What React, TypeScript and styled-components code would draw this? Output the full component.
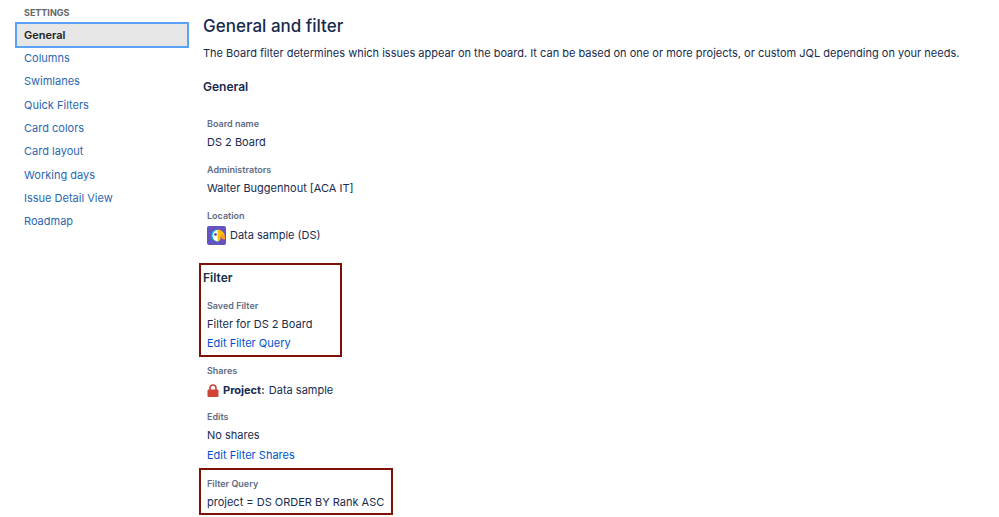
import React from "react";
import styled, { createGlobalStyle } from "styled-components";

const GlobalStyle = createGlobalStyle`
  *, *::before, *::after { box-sizing: border-box; }
  body {
    margin: 0;
    background: #fff;
    color: #172b4d;
    font-family: Inter, "Liberation Sans", sans-serif;
    font-size: 11px;
    line-height: 20px;
  }
`;

const Page = styled.div`
  display: grid;
  grid-template-columns: 174px minmax(0, 1fr);
  column-gap: 10px;
  padding: 0 15px;
`;

const Sidebar = styled.nav`
  padding-top: 5px;
`;

const SidebarTitle = styled.h2`
  margin: 0 0 2px;
  padding-left: 9px;
  color: #666;
  font-size: 9px;
  font-weight: 700;
  line-height: 16px;
`;

const NavList = styled.ul`
  display: grid;
  grid-auto-rows: 1fr;
  min-height: 210px;
  margin: 0;
  padding: 0 2px;
  list-style: none;
`;

const NavItem = styled.li`
  display: grid;
  align-items: center;
`;

const NavLink = styled.a<{ $active?: boolean }>`
  padding: 0 7px;
  outline: ${(p) => (p.$active ? "2px solid #5aa2f5" : "none")};
  background: ${(p) => (p.$active ? "#e6e6e6" : "transparent")};
  color: ${(p) => (p.$active ? "#222" : "#2a67b0")};
  font-weight: ${(p) => (p.$active ? 600 : 400)};
  line-height: 22px;
  text-decoration: none;
`;

const Main = styled.main`
  min-width: 0;
  padding-top: 14px;
`;

const Title = styled.h1`
  margin: 0 0 5px;
  padding-left: 4px;
  font-size: 17px;
  font-weight: 500;
  line-height: 24px;
`;

const Intro = styled.p`
  margin: 0 0 14px;
  padding-left: 4px;
`;

const SectionTitle = styled.h2`
  margin: 0;
  padding-left: 4px;
  font-size: 12px;
  font-weight: 600;
  line-height: 20px;
`;

const Fields = styled.dl<{ $top: number; $bottom: number; $gap?: number }>`
  display: grid;
  row-gap: ${(p) => p.$gap ?? 10}px;
  margin: 0;
  padding: ${(p) => p.$top}px 0 ${(p) => p.$bottom}px 8px;
`;

const Label = styled.dt`
  color: #5e6c84;
  font-size: 9px;
  font-weight: 600;
  line-height: 16px;
`;

const Value = styled.dd<{ $icon?: boolean }>`
  display: flex;
  align-items: center;
  gap: 4px;
  min-height: ${(p) => (p.$icon ? 22 : 20)}px;
  margin: 0;
`;

const LinkRow = styled.dd<{ $compact?: boolean }>`
  margin: 0;
  line-height: ${(p) => (p.$compact ? 18 : 20)}px;
`;

const ActionLink = styled.a`
  color: #0052cc;
  text-decoration: none;
`;

const Highlight = styled.section<{ $width: number }>`
  width: ${(p) => p.$width}px;
  max-width: 100%;
  border: 2px solid #7d1007;

  & ${SectionTitle} {
    padding: 3px 0 0 2px;
  }

  & ${Fields} {
    padding-left: 6px;
  }
`;

const Avatar = () => (
  <svg width="19" height="19" viewBox="0 0 19 19" aria-hidden="true">
    <rect width="19" height="19" rx="2" fill="#6554c0" />
    <path d="M10 3.500a6 6 0 0 0 0 12z" fill="#00b8d9" />
    <path d="M11 4a5 5.500 0 0 0-.500 11.500H11z" fill="#fff" />
    <path d="M10.500 3.500c3.800.2 6.800 3 7.500 7h-4.500v1.500c0 2-1.200 3.500-3 3.500z" fill="#ffc400" />
    <path d="M13.500 8.500c2 0 3.500 1 4.500 2.500v2.500c-2.500 0-4.200-1.300-4.500-3z" fill="#ff991f" />
    <circle cx="8.500" cy="8.500" r="1.300" fill="#403294" />
  </svg>
);

const Lock = () => (
  <svg width="12" height="13" viewBox="0 0 12 13" aria-hidden="true">
    <path d="M3 6V4a3 3 0 0 1 6 0v2" fill="none" stroke="#d04437" strokeWidth="1.600" />
    <rect x="0.500" y="5.500" width="11" height="7.500" rx="1" fill="#d04437" />
  </svg>
);

const navItems = [
  "General",
  "Columns",
  "Swimlanes",
  "Quick Filters",
  "Card colors",
  "Card layout",
  "Working days",
  "Issue Detail View",
  "Roadmap",
];

type FieldProps = { label: string; icon?: boolean; children: React.ReactNode };

const Field = ({ label, icon, children }: FieldProps) => (
  <div>
    <Label>{label}</Label>
    <Value $icon={icon}>{children}</Value>
  </div>
);

export default function App() {
  return (
    <>
      <GlobalStyle />
      <Page>
        <Sidebar aria-label="Settings">
          <SidebarTitle>SETTINGS</SidebarTitle>
          <NavList>
            {navItems.map((item, i) => (
              <NavItem key={item}>
                <NavLink href="#" $active={i === 0} aria-current={i === 0 ? "page" : undefined}>
                  {item}
                </NavLink>
              </NavItem>
            ))}
          </NavList>
        </Sidebar>
        <Main>
          <Title>General and filter</Title>
          <Intro>
            The Board filter determines which issues appear on the board. It can be based on one or
            more projects, or custom JQL depending on your needs.
          </Intro>
          <section>
            <SectionTitle>General</SectionTitle>
            <Fields $top={19} $bottom={17}>
              <Field label="Board name">DS 2 Board</Field>
              <Field label="Administrators">Walter Buggenhout [ACA IT]</Field>
              <Field label="Location" icon>
                <Avatar />
                Data sample (DS)
              </Field>
            </Fields>
          </section>
          <Highlight $width={143}>
            <SectionTitle>Filter</SectionTitle>
            <Fields $top={10} $bottom={3}>
              <div>
                <Label>Saved Filter</Label>
                <Value>Filter for DS 2 Board</Value>
                <LinkRow $compact>
                  <ActionLink href="#">Edit Filter Query</ActionLink>
                </LinkRow>
              </div>
            </Fields>
          </Highlight>
          <Fields $top={6} $bottom={3} $gap={8}>
            <Field label="Shares" icon>
              <Lock />
              <strong>Project:</strong>
              <span>Data sample</span>
            </Field>
            <div>
              <Label>Edits</Label>
              <Value>No shares</Value>
              <LinkRow>
                <ActionLink href="#">Edit Filter Shares</ActionLink>
              </LinkRow>
            </div>
          </Fields>
          <Highlight $width={194}>
            <Fields $top={6} $bottom={1}>
              <Field label="Filter Query">project = DS ORDER BY Rank ASC</Field>
            </Fields>
          </Highlight>
        </Main>
      </Page>
    </>
  );
}
